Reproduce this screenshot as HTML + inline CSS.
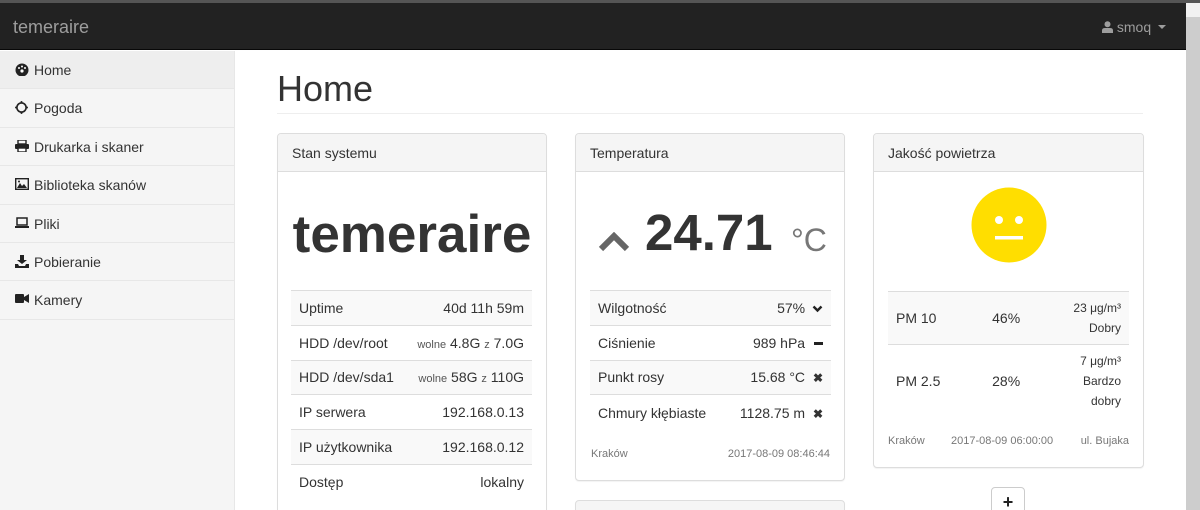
<!DOCTYPE html>
<html style="overflow:hidden;height:510px"><head><meta charset="utf-8"><style>
*{box-sizing:border-box;margin:0;padding:0}
body{width:1200px;height:510px;overflow:hidden;font-family:"Liberation Sans",sans-serif;font-size:14px;color:#333;background:#fff;position:relative}
.top{position:absolute;left:0;top:0;width:1200px;height:3px;background:#555}
.nav{position:absolute;left:0;top:3px;width:1186px;height:47px;background:#222;border-bottom:1px solid #080808}
.brand{position:absolute;left:13px;top:14px;font-size:18px;color:#9d9d9d}
.user{position:absolute;right:20px;top:16px;color:#9d9d9d;font-size:14px}
.sb{position:absolute;left:1186px;top:3px;width:14px;height:507px;background:#cdcdcd}
.sb:before{content:"";position:absolute;left:0;top:0;width:14px;height:14px;background:#f1f1f1}
.side{position:absolute;left:0;top:51px;width:235px;height:459px;background:#f5f5f5;border-right:1px solid #e7e7e7}
.side div{height:38.4px;border-bottom:1px solid #e7e7e7;padding:11px 0 0 34px;position:relative;font-size:14px;color:#333}
.side div.act{background:#eee}
.side svg{position:absolute;left:15px;top:12px}
h1{position:absolute;left:277px;top:68px;font-size:36px;font-weight:400;color:#333}
.hr{position:absolute;left:277px;top:113px;width:866px;height:1px;background:#eee}
.panel{position:absolute;border:1px solid #ddd;border-radius:4px;background:#fff;box-shadow:0 1px 1px rgba(0,0,0,.05)}
.ph{height:38px;background:#f5f5f5;border-bottom:1px solid #ddd;padding:11px 14px;border-radius:3px 3px 0 0}
table{border-collapse:collapse;position:absolute}
td{height:34.8px;border-top:1px solid #ddd;padding:0 8px}
tr:nth-child(odd) td{background:#f9f9f9}
.r{text-align:right}
.sm{font-size:11px;color:#555}
.foot{position:absolute;font-size:11px;color:#777}
</style></head><body>
<div class="top"></div>
<div class="nav"><div class="brand">temeraire</div>
<div class="user"><svg width="11" height="12" viewBox="0 0 11 12" style="vertical-align:-1px;margin-right:4px"><circle cx="5.5" cy="3.3" r="3" fill="#9d9d9d"/><path d="M0 12V9.5Q0 7 3 7h5q3 0 3 2.5V12z" fill="#9d9d9d"/></svg>smoq <span style="display:inline-block;border:4px solid transparent;border-top-color:#9d9d9d;border-bottom:0;vertical-align:3px;margin-left:3px"></span></div></div>
<div class="sb"></div>
<div class="side">
<div class="act"><svg width="14" height="13" viewBox="0 0 14 13"><circle cx="7" cy="7" r="6.5" fill="#222"/><circle cx="7" cy="8" r="1.6" fill="#fff"/><circle cx="4" cy="5" r="1" fill="#fff"/><circle cx="10" cy="5" r="1" fill="#fff"/><circle cx="7" cy="3.5" r="1" fill="#fff"/></svg>Home</div>
<div><svg width="13" height="13" viewBox="0 0 13 13"><circle cx="6.5" cy="6.5" r="4.6" fill="none" stroke="#222" stroke-width="1.6"/><circle cx="6.5" cy="1" r="1" fill="#222"/><circle cx="6.5" cy="12" r="1" fill="#222"/><circle cx="1" cy="6.5" r="1" fill="#222"/><circle cx="12" cy="6.5" r="1" fill="#222"/></svg>Pogoda</div>
<div><svg width="14" height="12" viewBox="0 0 14 12"><rect x="3" y="0" width="8" height="4" fill="none" stroke="#222" stroke-width="1.4"/><rect x="0" y="4" width="14" height="5" rx="1" fill="#222"/><rect x="3" y="8" width="8" height="4" fill="#fff" stroke="#222" stroke-width="1.4"/></svg>Drukarka i skaner</div>
<div><svg width="14" height="12" viewBox="0 0 14 12"><rect x=".7" y=".7" width="12.6" height="10.6" fill="none" stroke="#222" stroke-width="1.4"/><path d="M2 10L5 5l2 3 2-2 3 4z" fill="#222"/><circle cx="4" cy="3.5" r="1" fill="#222"/></svg>Biblioteka skanów</div>
<div><svg width="14" height="12" viewBox="0 0 14 12"><rect x="2" y="1" width="10" height="7" fill="none" stroke="#222" stroke-width="1.5"/><rect x="0" y="9" width="14" height="2" fill="#222"/></svg>Pliki</div>
<div><svg width="14" height="13" viewBox="0 0 14 13"><path d="M5 0h4v5h3L7 9 2 5h3z" fill="#222"/><path d="M0 9h3l1 2h6l1-2h3v4H0z" fill="#222"/></svg>Pobieranie</div>
<div><svg width="14" height="11" viewBox="0 0 14 11"><rect x="0" y="1" width="9" height="9" rx="1" fill="#222"/><path d="M9 4l5-3v9L9 7z" fill="#222"/></svg>Kamery</div>
</div>
<h1>Home</h1><div class="hr"></div>

<div class="panel" style="left:277px;top:133px;width:270px;height:390px">
<div class="ph">Stan systemu</div>
<div style="position:absolute;left:0;width:268px;top:70px;text-align:center;font-size:53px;font-weight:700;color:#333">temeraire</div>
<table style="left:13px;top:156px;width:241px">
<tr><td>Uptime</td><td class="r">40d 11h 59m</td></tr>
<tr><td>HDD /dev/root</td><td class="r"><span class="sm">wolne</span> 4.8G <span class="sm">z</span> 7.0G</td></tr>
<tr><td>HDD /dev/sda1</td><td class="r"><span class="sm">wolne</span> 58G <span class="sm">z</span> 110G</td></tr>
<tr><td>IP serwera</td><td class="r">192.168.0.13</td></tr>
<tr><td>IP użytkownika</td><td class="r">192.168.0.12</td></tr>
<tr><td>Dostęp</td><td class="r">lokalny</td></tr>
</table></div>

<div class="panel" style="left:575px;top:133px;width:270px;height:348px">
<div class="ph">Temperatura</div>
<svg width="32" height="20" viewBox="0 0 32 20" style="position:absolute;left:22px;top:98px"><path d="M3 17L16 4l13 13" fill="none" stroke="#666" stroke-width="6"/></svg>
<div style="position:absolute;left:69px;top:69px;font-size:51px;font-weight:700;color:#333">24.71</div>
<div style="position:absolute;left:215px;top:88px;font-size:32px;color:#777">°C</div>
<table style="left:14px;top:156px;width:241px">
<tr><td>Wilgotność</td><td class="r">57% <svg width="11" height="8" viewBox="0 0 11 8" style="margin-left:3px"><path d="M1.5 1.5l4 4 4-4" fill="none" stroke="#222" stroke-width="2.4"/></svg></td></tr>
<tr><td>Ciśnienie</td><td class="r">989 hPa <span style="display:inline-block;width:9px;height:3px;background:#222;vertical-align:3px;margin-left:5px"></span></td></tr>
<tr><td>Punkt rosy</td><td class="r">15.68 °C <b style="font-size:12px;margin-left:4px">✖</b></td></tr>
<tr><td>Chmury kłębiaste</td><td class="r">1128.75 m <b style="font-size:12px;margin-left:4px">✖</b></td></tr>
</table>
<div class="foot" style="left:15px;top:314px">Kraków</div>
<div class="foot" style="right:14px;top:314px">2017-08-09 08:46:44</div>
</div>
<div class="panel" style="left:575px;top:500px;width:270px;height:40px;background:#f5f5f5"></div>

<div class="panel" style="left:873px;top:133px;width:271px;height:335px">
<div class="ph">Jakość powietrza</div>
<svg width="76" height="76" viewBox="0 0 76 76" style="position:absolute;left:97px;top:53px"><circle cx="38" cy="38" r="37.5" fill="#ffde00"/><circle cx="28" cy="33" r="4" fill="#fff"/><circle cx="48" cy="33" r="4" fill="#fff"/><rect x="24" y="49" width="28" height="3.5" fill="#fff"/></svg>
<table style="left:14px;top:157px;width:241px">
<tr><td style="height:53px">PM 10</td><td style="text-align:center">46%</td><td class="r" style="font-size:12px;line-height:20px">23 μg/m³<br>Dobry</td></tr>
<tr><td style="height:72px">PM 2.5</td><td style="text-align:center">28%</td><td class="r" style="font-size:12px;line-height:20px">7 μg/m³<br>Bardzo<br>dobry</td></tr>
</table>
<div class="foot" style="left:14px;top:301px">Kraków</div>
<div class="foot" style="left:77px;top:301px">2017-08-09 06:00:00</div>
<div class="foot" style="right:14px;top:301px">ul. Bujaka</div>
</div>
<div style="position:absolute;left:991px;top:487px;width:34px;height:34px;border:1px solid #ccc;border-radius:4px;background:#fff;text-align:center;font-weight:700;font-size:18px;line-height:28px;color:#222">+</div>
</body></html>
